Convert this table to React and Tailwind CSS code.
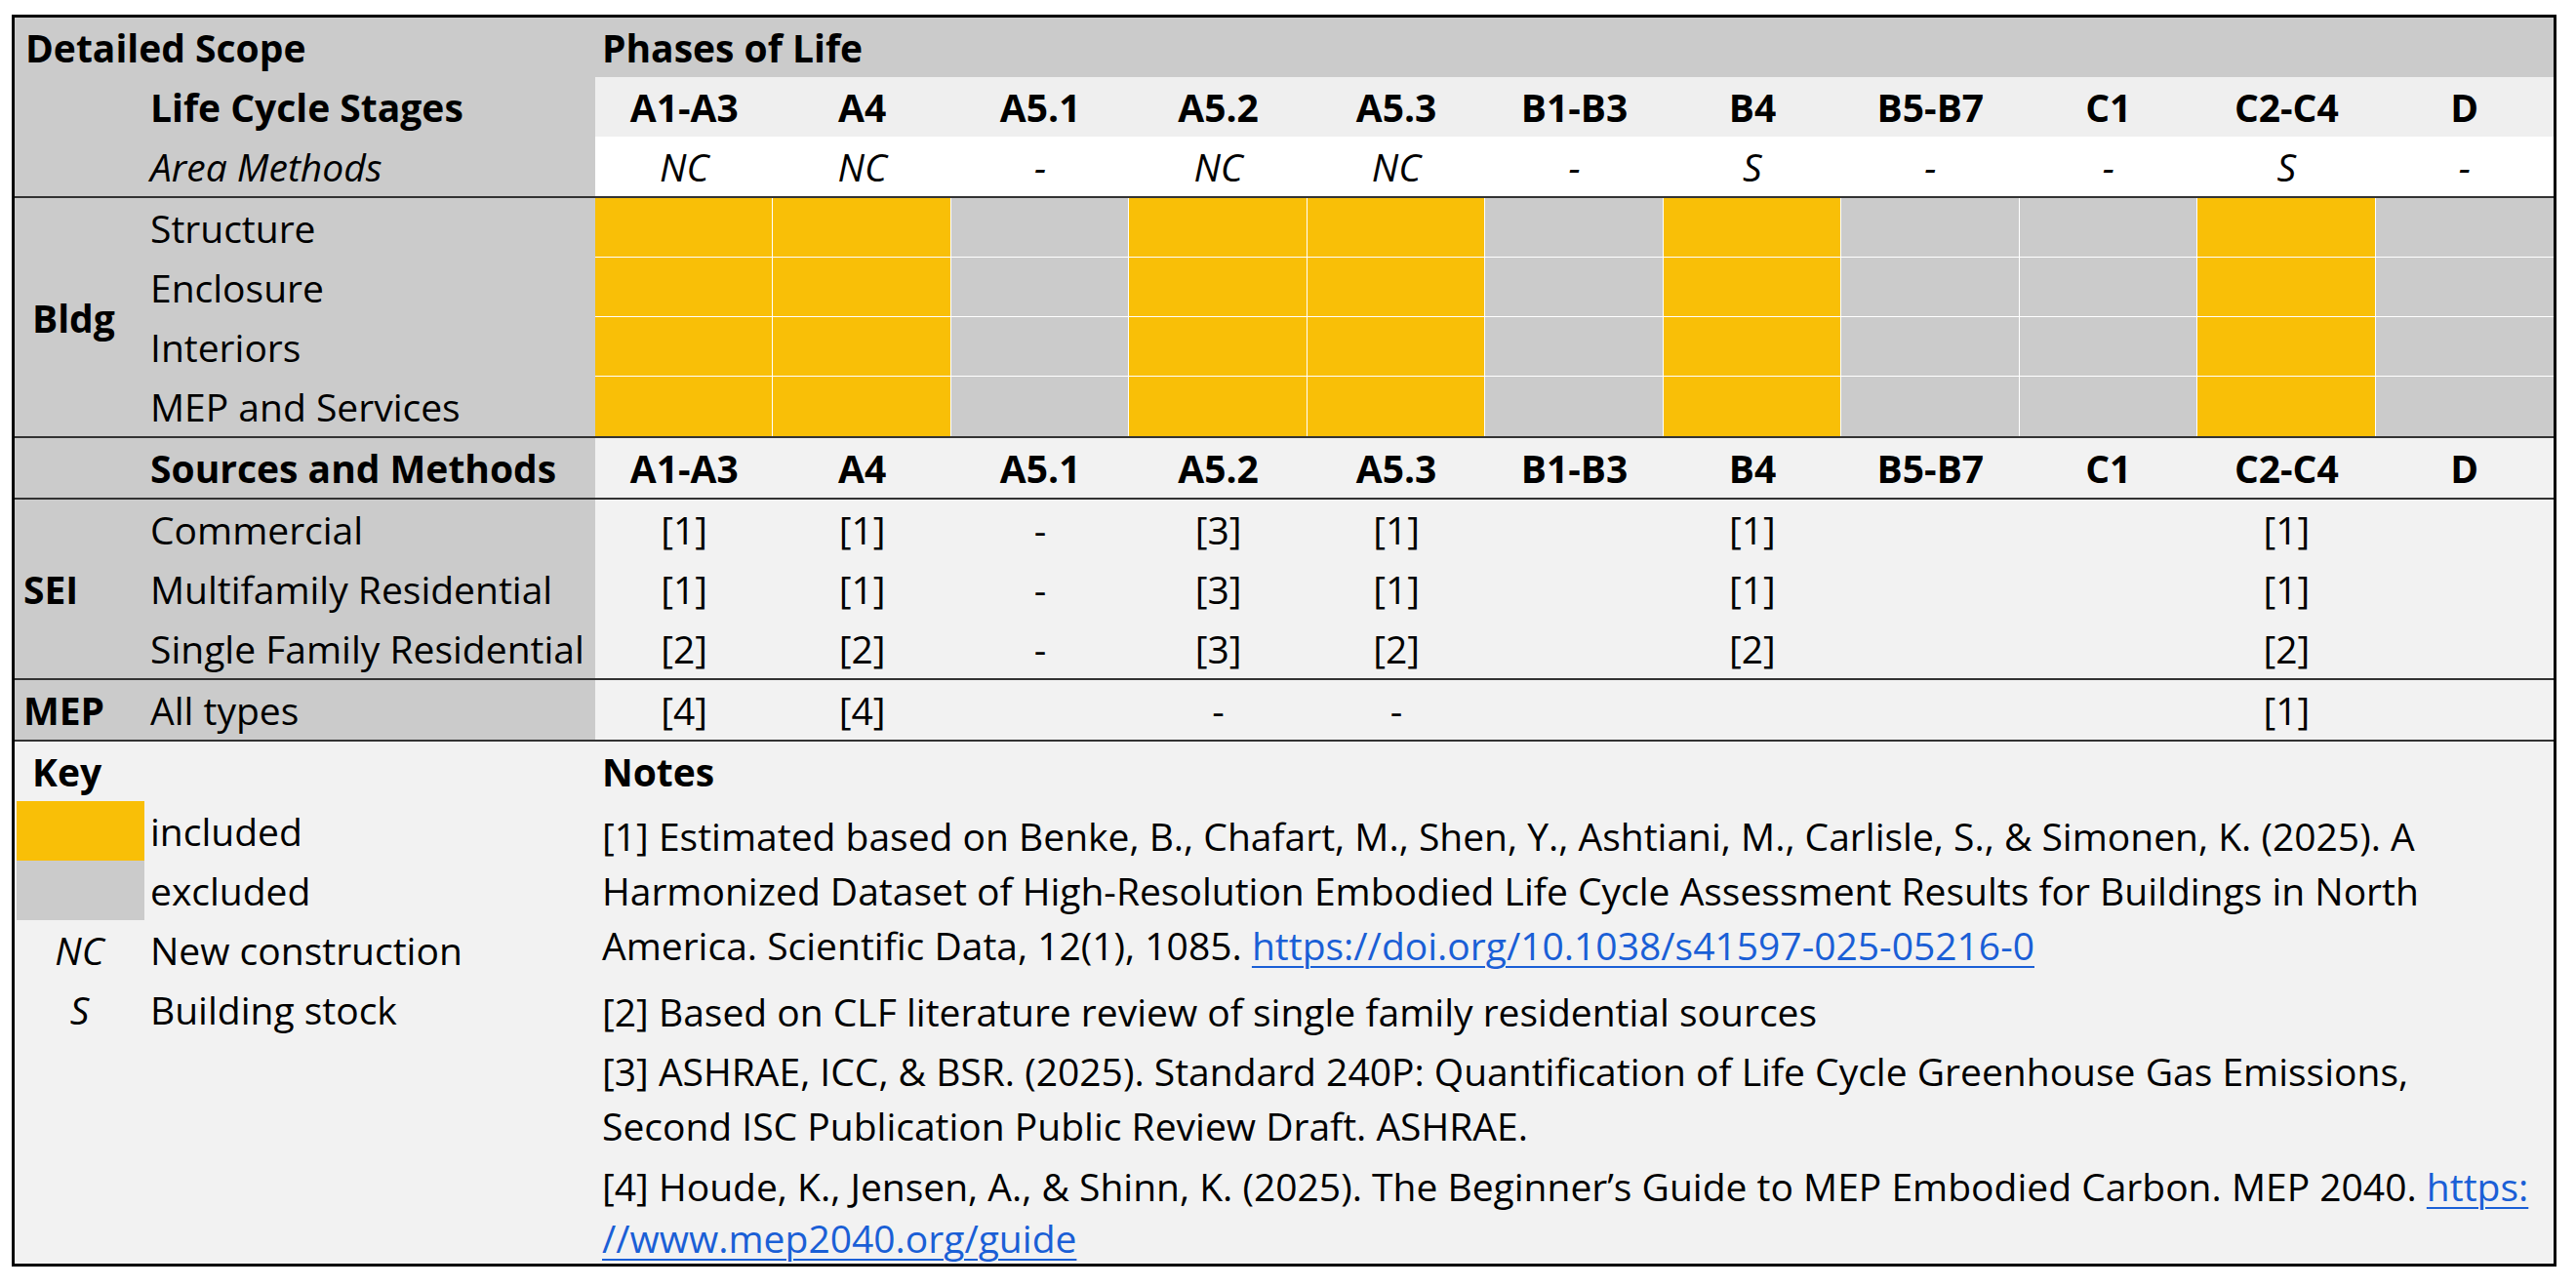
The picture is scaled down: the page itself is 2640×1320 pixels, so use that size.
import React from 'react';

// Life-cycle scope matrix — phases across, building scope / sources down.
const PHASES = ['A1-A3', 'A4', 'A5.1', 'A5.2', 'A5.3', 'B1-B3', 'B4', 'B5-B7', 'C1', 'C2-C4', 'D'];
const AREA = ['NC', 'NC', '-', 'NC', 'NC', '-', 'S', '-', '-', 'S', '-'];
const INCLUDED = [true, true, false, true, true, false, true, false, false, true, false];
const BLDG = ['Structure', 'Enclosure', 'Interiors', 'MEP and Services'];
const SEI = [
  ['Commercial', ['[1]', '[1]', '-', '[3]', '[1]', '', '[1]', '', '', '[1]', '']],
  ['Multifamily Residential', ['[1]', '[1]', '-', '[3]', '[1]', '', '[1]', '', '', '[1]', '']],
  ['Single Family Residential', ['[2]', '[2]', '-', '[3]', '[2]', '', '[2]', '', '', '[2]', '']],
];
const MEP = ['[4]', '[4]', '', '-', '-', '', '', '', '', '[1]', ''];

const GRID = 'grid grid-cols-[133px_462px_repeat(11,minmax(0,1fr))]';
const ROW = 'h-[61px]';
const CELL = 'flex items-center justify-center';
const LABEL = 'flex items-center whitespace-nowrap';
const SEP = 'border-b-2 border-[#333333]';
const LINK = 'text-[#1a5fd6] underline decoration-[2px] underline-offset-[6px]';

function PhaseRow({ values, italic, bold }) {
  return values.map((v, i) => (
    <div key={i} className={`${CELL} ${italic ? 'italic' : ''} ${bold ? 'font-bold' : ''}`}>{v}</div>
  ));
}

export default function App() {
  return (
    <div className="min-h-screen bg-white pl-[12px] pt-[15px] font-['Open_Sans',sans-serif] text-[39px] leading-none text-black">
      <div className="w-[2608px] border-[3px] border-black">
        {/* ── header ───────────────────────────────────────── */}
        <div className={SEP}>
          <div className={`flex ${ROW} bg-[#cbcbcb] font-bold`}>
            <div className={`${LABEL} w-[595px] pl-[11px]`}>Detailed Scope</div>
            <div className={`${LABEL} pl-[7px]`}>Phases of Life</div>
          </div>
          <div className={`${GRID} ${ROW}`}>
            <div className="bg-[#cbcbcb]" />
            <div className={`${LABEL} bg-[#cbcbcb] pl-[6px] font-bold`}>Life Cycle Stages</div>
            <div className="col-span-11 grid grid-cols-11 bg-[#efefef]">
              <PhaseRow values={PHASES} bold />
            </div>
          </div>
          <div className={`${GRID} ${ROW}`}>
            <div className="bg-[#cbcbcb]" />
            <div className={`${LABEL} bg-[#cbcbcb] pl-[6px] italic`}>Area Methods</div>
            <div className="col-span-11 grid grid-cols-11 bg-white">
              <PhaseRow values={AREA} italic />
            </div>
          </div>
        </div>

        {/* ── building scope ───────────────────────────────── */}
        <div className={`${GRID} grid-rows-[repeat(4,61px)] ${SEP}`}>
          <div className={`${LABEL} row-span-4 bg-[#cbcbcb] pl-[18px] font-bold`}>Bldg</div>
          {BLDG.map((name, r) => (
            <React.Fragment key={name}>
              <div className={`${LABEL} bg-[#cbcbcb] pl-[6px]`}>{name}</div>
              {INCLUDED.map((inc, i) => (
                <div
                  key={i}
                  className={`${inc ? 'bg-[#f9bf07]' : 'bg-[#cbcbcb]'} border-white ${i < 10 ? 'border-r' : ''} ${r < 3 ? 'border-b' : ''}`}
                />
              ))}
            </React.Fragment>
          ))}
        </div>

        {/* ── sources and methods ─────────────────────────── */}
        <div className={`${GRID} ${ROW} ${SEP} box-content`}>
          <div className="bg-[#cbcbcb]" />
          <div className={`${LABEL} bg-[#cbcbcb] pl-[6px] font-bold`}>Sources and Methods</div>
          <div className="col-span-11 grid grid-cols-11 bg-[#f2f2f2]">
            <PhaseRow values={PHASES} bold />
          </div>
        </div>

        <div className={`${GRID} grid-rows-[repeat(3,61px)] ${SEP}`}>
          <div className={`${LABEL} row-span-3 bg-[#cbcbcb] pl-[9px] font-bold`}>SEI</div>
          {SEI.map(([name, vals]) => (
            <React.Fragment key={name}>
              <div className={`${LABEL} bg-[#cbcbcb] pl-[6px]`}>{name}</div>
              <div className="col-span-11 grid grid-cols-11 bg-[#f2f2f2]">
                <PhaseRow values={vals} />
              </div>
            </React.Fragment>
          ))}
        </div>

        <div className={`${GRID} ${ROW} ${SEP} box-content`}>
          <div className={`${LABEL} bg-[#cbcbcb] pl-[9px] font-bold`}>MEP</div>
          <div className={`${LABEL} bg-[#cbcbcb] pl-[6px]`}>All types</div>
          <div className="col-span-11 grid grid-cols-11 bg-[#f2f2f2]">
            <PhaseRow values={MEP} />
          </div>
        </div>

        {/* ── key + notes ──────────────────────────────────── */}
        <div className="flex h-[535px] bg-[#f2f2f2]">
          <div className="w-[595px] shrink-0">
            <div className={`${LABEL} ${ROW} pl-[18px] font-bold`}>Key</div>
            <div className={`grid grid-cols-[133px_462px] ${ROW}`}>
              <div className="ml-[2px] bg-[#f9bf07]" />
              <div className={`${LABEL} pl-[6px]`}>included</div>
            </div>
            <div className={`grid grid-cols-[133px_462px] ${ROW}`}>
              <div className="ml-[2px] bg-[#cbcbcb]" />
              <div className={`${LABEL} pl-[6px]`}>excluded</div>
            </div>
            <div className={`grid grid-cols-[133px_462px] ${ROW}`}>
              <div className={`${CELL} italic`}>NC</div>
              <div className={`${LABEL} pl-[6px]`}>New construction</div>
            </div>
            <div className={`grid grid-cols-[133px_462px] ${ROW}`}>
              <div className={`${CELL} italic`}>S</div>
              <div className={`${LABEL} pl-[6px]`}>Building stock</div>
            </div>
          </div>

          <div className="min-w-0 flex-1 overflow-hidden pl-[7px]">
            <div className={`${LABEL} ${ROW} font-bold`}>Notes</div>
            <div className="mt-[8px] whitespace-nowrap leading-[56px]">
              <p>[1] Estimated based on Benke, B., Chafart, M., Shen, Y., Ashtiani, M., Carlisle, S., &amp; Simonen, K. (2025). A</p>
              <p>Harmonized Dataset of High-Resolution Embodied Life Cycle Assessment Results for Buildings in North</p>
              <p>
                America. Scientific Data, 12(1), 1085.{' '}
                <a href="#" className={LINK}>https://doi.org/10.1038/s41597-025-05216-0</a>
              </p>
              <p className="mt-[12px]">[2] Based on CLF literature review of single family residential sources</p>
              <p className="mt-[5px]">[3] ASHRAE, ICC, &amp; BSR. (2025). Standard 240P: Quantification of Life Cycle Greenhouse Gas Emissions,</p>
              <p>Second ISC Publication Public Review Draft. ASHRAE.</p>
              <p className="mt-[6px]">
                [4] Houde, K., Jensen, A., &amp; Shinn, K. (2025). The Beginner’s Guide to MEP Embodied Carbon. MEP 2040.{' '}
                <a href="#" className={LINK}>https:</a>
              </p>
              <p className="leading-[50px]">
                <a href="#" className={LINK}>//www.mep2040.org/guide</a>
              </p>
            </div>
          </div>
        </div>
      </div>
    </div>
  );
}
